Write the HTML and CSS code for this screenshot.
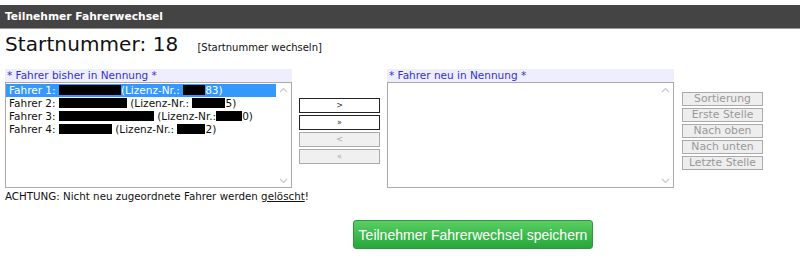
FILE: index.html
```html
<!DOCTYPE html>
<html>
<head>
<meta charset="utf-8">
<link rel="stylesheet" href="styles.css">
</head>
<body>
<div class="header">Teilnehmer Fahrerwechsel</div>
<div class="content">
  <div class="title-row">
    <span class="title">Startnummer: 18</span>
    <span class="switch">[Startnummer wechseln]</span>
  </div>
  <div class="lists">
    <div class="col">
      <div class="label">* Fahrer bisher in Nennung *</div>
      <div class="listbox">
        <div class="items">
          <div class="item selected">Fahrer 1: <span class="redact r1a"></span>(Lizenz-Nr.: <span class="redact r1b"></span>83)</div>
          <div class="item">Fahrer 2: <span class="redact r2a"></span> (Lizenz-Nr.: <span class="redact r2b"></span>5)</div>
          <div class="item">Fahrer 3: <span class="redact r3a"></span> (Lizenz-Nr.:<span class="redact r3b"></span>0)</div>
          <div class="item">Fahrer 4: <span class="redact r4a"></span> (Lizenz-Nr.: <span class="redact r4b"></span>2)</div>
        </div>
        <div class="scroll">
          <svg width="9" height="6" viewBox="0 0 9 6"><path d="M1 5 L4.5 1.5 L8 5" fill="none" stroke="#c8c8c8" stroke-width="1.2"/></svg>
          <svg width="9" height="6" viewBox="0 0 9 6"><path d="M1 1 L4.5 4.5 L8 1" fill="none" stroke="#c8c8c8" stroke-width="1.2"/></svg>
        </div>
      </div>
    </div>
    <div class="mid">
      <button class="mbtn on">&gt;</button>
      <button class="mbtn on">&raquo;</button>
      <button class="mbtn off">&lt;</button>
      <button class="mbtn off">&laquo;</button>
    </div>
    <div class="col">
      <div class="label">* Fahrer neu in Nennung *</div>
      <div class="listbox">
        <div class="items"></div>
        <div class="scroll">
          <svg width="9" height="6" viewBox="0 0 9 6"><path d="M1 5 L4.5 1.5 L8 5" fill="none" stroke="#c8c8c8" stroke-width="1.2"/></svg>
          <svg width="9" height="6" viewBox="0 0 9 6"><path d="M1 1 L4.5 4.5 L8 1" fill="none" stroke="#c8c8c8" stroke-width="1.2"/></svg>
        </div>
      </div>
    </div>
    <div class="sort">
      <button class="sbtn">Sortierung</button>
      <button class="sbtn">Erste Stelle</button>
      <button class="sbtn">Nach oben</button>
      <button class="sbtn">Nach unten</button>
      <button class="sbtn">Letzte Stelle</button>
    </div>
  </div>
  <p class="warn">ACHTUNG: Nicht neu zugeordnete Fahrer werden <u>gelöscht</u>!</p>
  <div class="save-row">
    <button class="save">Teilnehmer Fahrerwechsel speichern</button>
  </div>
</div>
</body>
</html>
```
FILE: styles.css
```css
html, body {
  margin: 0;
  padding: 0;
  background: #fff;
  font-family: "DejaVu Sans", Verdana, sans-serif;
  font-size: 10px;
  color: #111;
}
.header {
  margin-top: 5px;
  height: 23px;
  line-height: 23px;
  background: #444;
  border-bottom: 1px solid #999;
  color: #fff;
  font-weight: bold;
  font-size: 10.7px;
  padding-left: 5px;
}
.content {
  padding-left: 5px;
}
.title-row {
  display: flex;
  align-items: baseline;
  height: 34px;
  padding-top: 3px;
  box-sizing: border-box;
}
.title {
  font-size: 20px;
  letter-spacing: 0.1px;
}
.switch {
  margin-left: 19px;
  font-size: 10px;
}
.lists {
  display: flex;
  align-items: flex-start;
  margin-top: 6px;
}
.col {
  width: 287px;
}
.label {
  height: 13px;
  line-height: 13px;
  background: #eeeeff;
  color: #3333cc;
  font-size: 10.5px;
  padding-left: 2px;
}
.listbox {
  height: 104px;
  border: 1px solid #aaa;
  display: flex;
}
.items {
  flex: 1;
  padding-top: 1px;
}
.item {
  height: 13px;
  line-height: 13px;
  padding-left: 3px;
  font-size: 10.5px;
  white-space: nowrap;
}
.item.selected {
  background: #3399ff;
  color: #fff;
}
.redact {
  display: inline-block;
  height: 10px;
  background: #000;
  vertical-align: -1px;
}
.r1a { width: 62px; }
.r1b { width: 22px; }
.r2a { width: 68px; }
.r2b { width: 33px; }
.r3a { width: 95px; }
.r3b { width: 26px; }
.r4a { width: 53px; }
.r4b { width: 28px; }
.scroll {
  width: 15px;
  display: flex;
  flex-direction: column;
  justify-content: space-between;
  align-items: center;
  padding: 4px 0 3px 0;
}
.mid {
  width: 81px;
  margin: 29px 7px 0 7px;
  display: flex;
  flex-direction: column;
  gap: 2px;
}
.mbtn {
  height: 15px;
  padding: 0;
  font-family: "DejaVu Sans", sans-serif;
  font-size: 8px;
  line-height: 13px;
  background: #fff;
  border: 1px solid #222;
  color: #333;
}
.mbtn.off {
  background: #f0f0f0;
  border-color: #aaa;
  color: #aaa;
}
.sort {
  width: 81px;
  margin: 23px 0 0 8px;
  display: flex;
  flex-direction: column;
  gap: 2px;
}
.sbtn {
  height: 14px;
  padding: 0;
  font-family: "DejaVu Sans", sans-serif;
  font-size: 10.8px;
  line-height: 12px;
  background: #eee;
  border: 1px solid #aaa;
  color: #999;
}
.warn {
  margin: 2px 0 0 0;
  font-size: 10.3px;
  line-height: 12px;
}
.save-row {
  display: flex;
  margin-top: 18px;
  padding-left: 348px;
}
.save {
  width: 240px;
  height: 29px;
  border: 1px solid #2f9a3a;
  border-radius: 3px;
  background: linear-gradient(#58cf62, #28a63a);
  color: #fff;
  font-family: "Liberation Sans", Arial, sans-serif;
  font-size: 14px;
  padding: 0;
}
```
